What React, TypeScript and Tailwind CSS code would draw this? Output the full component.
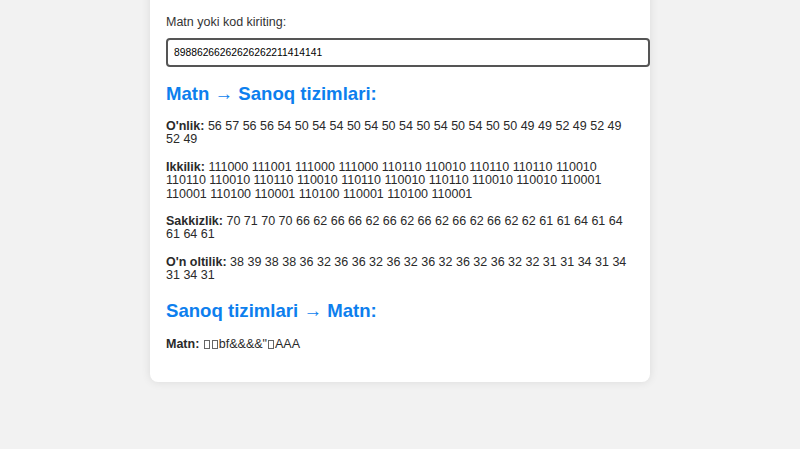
import React from "react";

const Tofu = () => (
  <span className="inline-block w-[6px] h-[9px] border border-[#666] mx-[1px] align-[-1px]" />
);

export default function App() {
  const rows: [string, string][] = [
    ["O'nlik:", "56 57 56 56 54 50 54 54 50 54 50 54 50 54 50 54 50 50 49 49 52 49 52 49 52 49"],
    [
      "Ikkilik:",
      "111000 111001 111000 111000 110110 110010 110110 110110 110010 110110 110010 110110 110010 110110 110010 110110 110010 110010 110001 110001 110100 110001 110100 110001 110100 110001",
    ],
    ["Sakkizlik:", "70 71 70 70 66 62 66 66 62 66 62 66 62 66 62 66 62 62 61 61 64 61 64 61 64 61"],
    ["O'n oltilik:", "38 39 38 38 36 32 36 36 32 36 32 36 32 36 32 36 32 32 31 31 34 31 34 31 34 31"],
  ];
  return (
    <div className="min-h-[449px] w-full bg-[#f2f2f2] flex justify-center items-start font-['Liberation_Sans',Arial,sans-serif] text-[#333]">
      <div className="w-[500px] mt-[-20px] bg-white rounded-[8px] shadow-[0_0_10px_rgba(0,0,0,0.1)] px-[16px] pt-[35px] pb-[31px]">
        <div className="text-[12.5px] leading-[15px] text-[#333]">Matn yoki kod kiriting:</div>
        <div className="mt-[8px] mr-[-16px] h-[29px] border-2 border-[#555] rounded-[4px] flex items-center px-[6px] text-[10.3px] text-black">
          89886266262626262211414141
        </div>
        <h2 className="mt-[15px] text-[18.6px] leading-[24px] font-bold text-[#0d7fee]">
          Matn → Sanoq tizimlari:
        </h2>
        <div className="mt-[14px] flex flex-col gap-[14px] text-[12.5px] leading-[13.4px] text-[#2a2a2a]">
          {rows.map(([k, v]) => (
            <p key={k}>
              <b>{k}</b> {v}
            </p>
          ))}
        </div>
        <h2 className="mt-[16px] text-[18.6px] leading-[24px] font-bold text-[#0d7fee]">
          Sanoq tizimlari → Matn:
        </h2>
        <p className="mt-[15px] text-[12.5px] leading-[13.4px] text-[#2a2a2a]">
          <b>Matn:</b> <Tofu />
          <Tofu />
          bf&amp;&amp;&amp;&amp;"
          <Tofu />
          AAA
        </p>
      </div>
    </div>
  );
}
